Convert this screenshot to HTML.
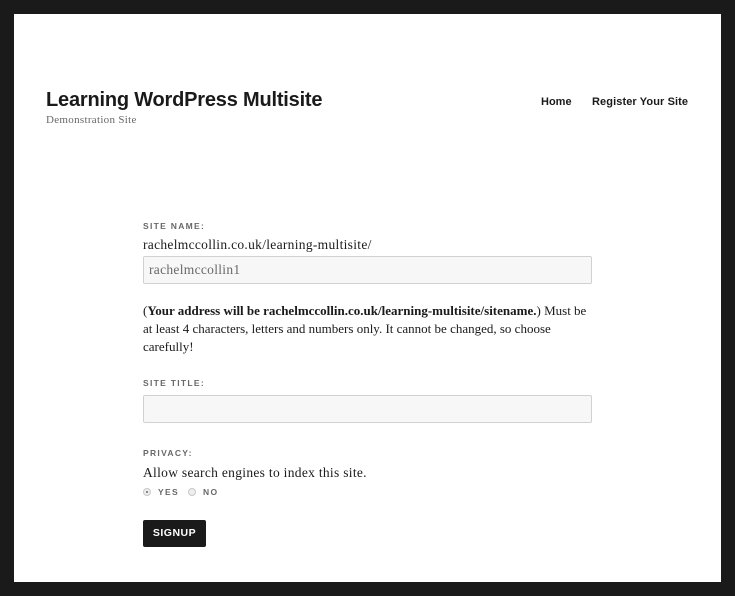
<!DOCTYPE html>
<html><head><style>
*{margin:0;padding:0;box-sizing:border-box}
html,body{width:735px;height:596px;background:#1a1a1a;overflow:hidden}
.page{position:absolute;left:14px;top:14px;width:707px;height:568px;background:#fff}
.abs{position:absolute;white-space:nowrap}
.sans{font-family:"Liberation Sans",sans-serif}
.serif{font-family:"Liberation Serif",serif;color:#1a1a1a;letter-spacing:0.3px}
.lbl{font-family:"Liberation Sans",sans-serif;font-size:8.5px;font-weight:bold;letter-spacing:1.3px;color:#686868}
.inp{position:absolute;left:143px;width:449px;height:28px;background:#f7f7f7;border:1px solid #d1d1d1;border-radius:2px}
.radio{position:absolute;width:8px;height:8px;border-radius:50%;border:1px solid #c8c8c8;background:#eee}
</style></head><body>
<div class="page"></div>
<div class="abs sans" style="left:46px;top:89px;font-size:20px;font-weight:bold;color:#1a1a1a;letter-spacing:-0.2px">Learning WordPress Multisite</div>
<div class="abs serif" style="left:46px;top:114px;font-size:11px;color:#686868">Demonstration Site</div>
<div class="abs sans" style="left:541px;top:96px;font-size:11px;font-weight:bold;color:#1a1a1a">Home</div>
<div class="abs sans" style="left:592px;top:96px;font-size:11px;font-weight:bold;color:#1a1a1a;letter-spacing:0.1px">Register Your Site</div>

<div class="abs lbl" style="left:143px;top:221px">SITE NAME:</div>
<div class="abs serif" style="left:143px;top:237px;font-size:13.5px">rachelmccollin.co.uk/learning-multisite/</div>
<div class="inp" style="top:256px"></div>
<div class="abs serif" style="left:149px;top:262px;font-size:13.5px;color:#686868">rachelmccollin1</div>
<div class="abs serif" style="left:143px;top:302px;font-size:13px;line-height:18px;letter-spacing:0">(<b>Your address will be rachelmccollin.co.uk/learning-multisite/sitename.</b>) Must be<br>at least 4 characters, letters and numbers only. It cannot be changed, so choose<br>carefully!</div>

<div class="abs lbl" style="left:143px;top:378px">SITE TITLE:</div>
<div class="inp" style="top:395px"></div>

<div class="abs lbl" style="left:143px;top:448px">PRIVACY:</div>
<div class="abs serif" style="left:143px;top:465px;font-size:13.5px">Allow search engines to index this site.</div>
<div class="radio" style="left:143px;top:488px"><div style="position:absolute;left:2px;top:2px;width:2px;height:2px;border-radius:50%;background:#666"></div></div>
<div class="abs lbl" style="left:158px;top:487px">YES</div>
<div class="radio" style="left:188px;top:488px"></div>
<div class="abs lbl" style="left:203px;top:487px">NO</div>

<div class="abs sans" style="left:143px;top:520px;width:63px;height:27px;background:#1a1a1a;border-radius:2px;color:#fff;font-size:10.5px;font-weight:bold;text-align:center;line-height:27px;letter-spacing:0.5px">SIGNUP</div>
</body></html>
